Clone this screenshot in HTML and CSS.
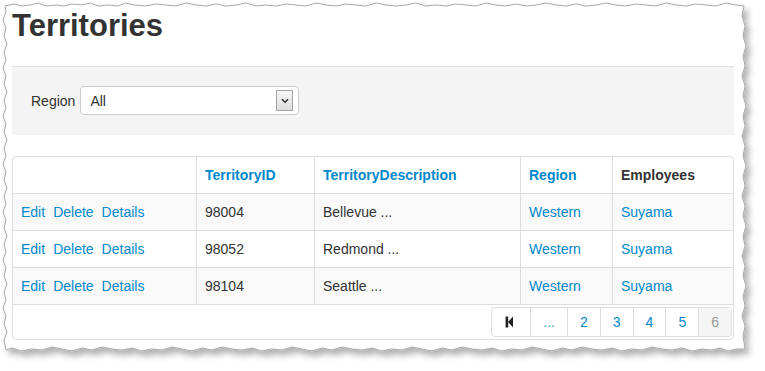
FILE: index.html
```html
<!DOCTYPE html>
<html>
<head>
<meta charset="utf-8">
<title>Territories</title>
<link rel="stylesheet" href="styles.css">
</head>
<body>
<svg class="paper-bg" width="765" height="371" viewBox="0 0 765 371" aria-hidden="true">
  <defs>
    <filter id="sh" x="-5%" y="-5%" width="110%" height="115%">
      <feDropShadow dx="4" dy="5" stdDeviation="3" flood-color="#000" flood-opacity="0.3"/>
    </filter>
  </defs>
  <path filter="url(#sh)" fill="#fff" stroke="#a8a8a8" stroke-width="1" d="M5,6 L14,4 L22,6 L30,5 L38,3 L46,6 L56,5 L64,6 L72,4 L82,5 L90,3 L98,6 L108,5 L118,6 L126,3 L134,5 L146,6 L156,4 L166,5 L176,6 L186,3 L196,5 L206,6 L216,4 L226,6 L236,5 L246,3 L256,6 L266,5 L276,6 L286,4 L296,5 L306,6 L316,3 L326,5 L336,6 L346,4 L356,5 L366,6 L376,3 L386,5 L396,6 L406,5 L416,3 L426,6 L436,5 L446,6 L456,4 L466,5 L476,6 L486,3 L496,5 L506,6 L516,4 L526,6 L536,5 L546,3 L556,5 L566,6 L576,4 L586,6 L596,5 L606,3 L616,5 L626,6 L636,4 L646,5 L656,6 L666,3 L676,5 L686,6 L696,4 L706,5 L716,6 L726,3 L736,5 L744,6 L742,16 L745,26 L743,36 L746,46 L743,56 L745,66 L742,76 L745,86 L743,96 L746,106 L743,116 L745,126 L742,136 L745,146 L743,156 L746,166 L743,176 L745,186 L742,196 L745,206 L743,216 L746,226 L743,236 L745,246 L742,256 L745,266 L743,276 L746,286 L743,296 L745,306 L742,316 L745,326 L743,336 L745,349 L736,349 L728,351 L720,348 L712,350 L702,349 L692,351 L682,348 L672,350 L662,349 L652,347 L642,350 L632,349 L622,351 L612,348 L602,350 L592,349 L582,347 L572,350 L562,348 L552,351 L542,349 L532,347 L522,350 L512,349 L502,351 L492,348 L482,350 L472,349 L462,347 L452,350 L442,348 L432,351 L422,349 L412,347 L402,350 L392,349 L382,351 L372,348 L362,350 L352,349 L342,347 L332,350 L322,348 L312,351 L302,349 L292,347 L282,350 L272,349 L262,351 L252,348 L242,350 L232,349 L222,347 L212,350 L202,348 L192,351 L182,349 L172,347 L162,350 L152,349 L142,351 L132,348 L122,350 L112,349 L102,347 L92,350 L82,348 L72,351 L62,349 L52,347 L42,350 L32,349 L22,351 L12,348 L6,350 L4,340 L7,332 L4,324 L6,316 L3,308 L6,300 L4,292 L7,284 L4,276 L6,268 L3,260 L6,252 L4,244 L7,236 L4,228 L6,220 L3,212 L6,204 L4,196 L7,188 L4,180 L6,172 L3,164 L6,156 L4,148 L7,140 L4,132 L6,124 L3,116 L6,108 L4,100 L7,92 L4,84 L6,76 L3,68 L6,60 L4,52 L7,44 L4,36 L6,28 L3,20 L6,12 Z"/>
</svg>

<div class="sheet">
  <h1 class="title">Territories</h1>

  <div class="filter">
    <span class="filter-label">Region</span>
    <div class="select">
      <span class="select-value">All</span>
      <span class="select-arrow">
        <svg width="8" height="6" viewBox="0 0 8 6"><path d="M1,1.2 L4,4.2 L7,1.2" fill="none" stroke="#333" stroke-width="1.6"/></svg>
      </span>
    </div>
  </div>

  <table class="grid">
    <colgroup>
      <col class="c1"><col class="c2"><col class="c3"><col class="c4"><col class="c5">
    </colgroup>
    <thead>
      <tr>
        <th></th>
        <th><a href="#">TerritoryID</a></th>
        <th><a href="#">TerritoryDescription</a></th>
        <th><a href="#">Region</a></th>
        <th>Employees</th>
      </tr>
    </thead>
    <tbody>
      <tr class="odd">
        <td class="actions"><a href="#">Edit</a><a href="#">Delete</a><a href="#">Details</a></td>
        <td>98004</td>
        <td>Bellevue ...</td>
        <td><a href="#">Western</a></td>
        <td><a href="#">Suyama</a></td>
      </tr>
      <tr>
        <td class="actions"><a href="#">Edit</a><a href="#">Delete</a><a href="#">Details</a></td>
        <td>98052</td>
        <td>Redmond ...</td>
        <td><a href="#">Western</a></td>
        <td><a href="#">Suyama</a></td>
      </tr>
      <tr class="odd">
        <td class="actions"><a href="#">Edit</a><a href="#">Delete</a><a href="#">Details</a></td>
        <td>98104</td>
        <td>Seattle ...</td>
        <td><a href="#">Western</a></td>
        <td><a href="#">Suyama</a></td>
      </tr>
    </tbody>
    <tfoot>
      <tr>
        <td colspan="5" class="pager-cell">
          <ul class="pagination">
            <li><a href="#" class="first"><svg width="14" height="12" viewBox="0 0 14 12"><rect x="1.6" y="0.5" width="2.6" height="11" fill="#222"/><path d="M4,6 L9,0.5 L9,11.5 Z" fill="#222"/></svg></a></li>
            <li><a href="#" class="dots">...</a></li>
            <li><a href="#">2</a></li>
            <li><a href="#">3</a></li>
            <li><a href="#">4</a></li>
            <li><a href="#">5</a></li>
            <li><span class="current">6</span></li>
          </ul>
        </td>
      </tr>
    </tfoot>
  </table>
</div>
</body>
</html>
```

FILE: styles.css
```css
* { box-sizing: border-box; }

body {
  margin: 0;
  background: #fff;
  font-family: "Liberation Sans", Arial, sans-serif;
  font-size: 14px;
  color: #333;
}

a { color: #0088cc; text-decoration: none; }

.paper-bg {
  position: absolute;
  left: 0;
  top: 0;
}

.sheet {
  position: relative;
  width: 734px;
  padding: 6px 0 0 12px;
}

.title {
  margin: 0 0 20px;
  font-size: 31px;
  line-height: 40px;
  font-weight: bold;
  color: #333;
}

.filter {
  display: flex;
  align-items: center;
  gap: 5px;
  background: #f4f4f4;
  border-top: 1px solid #e3e3e3;
  padding: 19px 19px 20px;
}

.select {
  width: 219px;
  height: 29px;
  border: 1px solid #ccc;
  border-radius: 4px;
  background: #fff;
  display: flex;
  align-items: center;
  justify-content: space-between;
  padding: 0 5px 0 9px;
}

.select-arrow {
  width: 17px;
  height: 21px;
  border: 1px solid #a3a3a3;
  background: linear-gradient(#f6f6f6, #dedede);
  display: flex;
  align-items: center;
  justify-content: center;
}

.grid {
  margin-top: 21px;
  width: 722px;
  table-layout: fixed;
  border-collapse: separate;
  border-spacing: 0;
  border: 1px solid #ddd;
  border-radius: 4px;
}

.c1 { width: 183px; }
.c2 { width: 118px; }
.c3 { width: 206px; }
.c4 { width: 92px; }
.c5 { width: 121px; }

.grid th,
.grid td {
  padding: 8px;
  line-height: 20px;
  text-align: left;
  border-left: 1px solid #ddd;
  border-top: 1px solid #ddd;
  white-space: nowrap;
  overflow: hidden;
}

.grid th { font-weight: bold; color: #333; border-top: 0; }
.grid th:first-child,
.grid td:first-child { border-left: 0; }

.grid tr.odd td { background: #f9f9f9; }

.actions a { margin-right: 8px; }

.grid td.pager-cell {
  padding: 2px 1px 2px;
  text-align: right;
  line-height: 0;
}

.pagination {
  display: inline-flex;
  margin: 0;
  padding: 0;
  list-style: none;
  border: 1px solid #ddd;
  border-radius: 4px;
  overflow: hidden;
  line-height: 28px;
}

.pagination li a,
.pagination li span {
  display: block;
  padding: 0 12px;
  height: 28px;
  border-left: 1px solid #ddd;
}

.pagination li:first-child a { border-left: 0; }

.pagination .first {
  display: flex;
  align-items: center;
}

.pagination .dots { color: #3aa6dd; }

.pagination .current {
  background: #f5f5f5;
  color: #999;
}
```
